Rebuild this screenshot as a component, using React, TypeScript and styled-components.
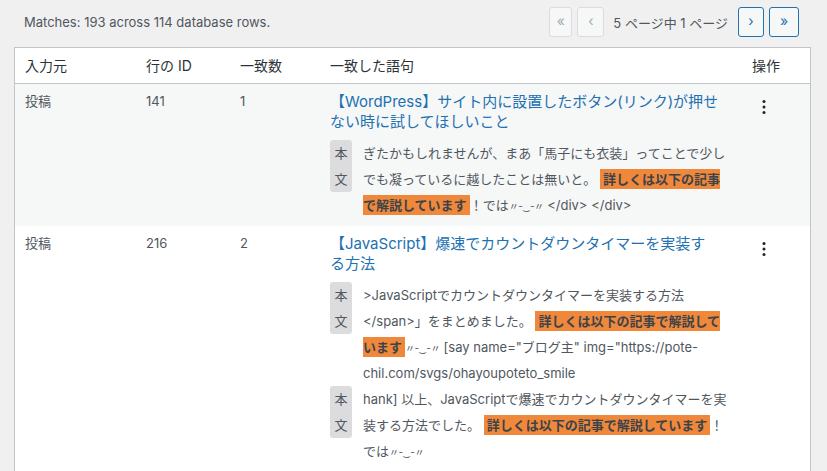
import React from "react";
import styled, { createGlobalStyle } from "styled-components";

const GlobalStyle = createGlobalStyle`
  *, *::before, *::after { box-sizing: border-box; }
  body {
    margin: 0;
    background: #f0f0f1;
    font-family: "Inter", "Noto Sans CJK JP", sans-serif;
    color: #3c434a;
  }
`;

const Page = styled.div`
  padding: 0 16px 0 14px;
`;

const TopBar = styled.div`
  display: flex;
  justify-content: space-between;
  align-items: center;
  padding: 7px 12px 10px 10px;
`;

const Summary = styled.div`
  font-size: 13px;
  color: #50575e;
`;

const Pager = styled.div`
  display: flex;
  align-items: center;
  gap: 5px;
`;

const PageButton = styled.span<{ $w: number; $disabled?: boolean }>`
  display: flex;
  align-items: center;
  justify-content: center;
  width: ${(p) => p.$w}px;
  height: 30px;
  border: 1px solid ${(p) => (p.$disabled ? "#dcdcde" : "#2271b1")};
  border-radius: 3px;
  background: #f6f7f7;
  color: ${(p) => (p.$disabled ? "#a7aaad" : "#2271b1")};
  font-size: 14px;
  line-height: 1;
  padding-bottom: 2px;
`;

const PageText = styled.span`
  font-size: 13px;
  color: #50575e;
  margin: 0 5px 0 4px;
`;

const Table = styled.table`
  width: 100%;
  table-layout: fixed;
  border-collapse: separate;
  border-spacing: 0;
  background: #fff;
  border: 1px solid #c3c4c7;
`;

const Th = styled.th<{ $w?: number }>`
  width: ${(p) => (p.$w ? `${p.$w}px` : "auto")};
  text-align: left;
  font-weight: 400;
  font-size: 14px;
  line-height: 19px;
  color: #2c3338;
  padding: 8px 10px;
  border-bottom: 1px solid #c3c4c7;
`;

const Row = styled.tr<{ $alt?: boolean }>`
  background: ${(p) => (p.$alt ? "#f6f7f7" : "#fff")};
`;

const Td = styled.td`
  vertical-align: top;
  padding: 8px 10px;
  font-size: 13px;
  line-height: 19.5px;
  color: #50575e;
`;

const Title = styled.a`
  display: block;
  font-size: 15px;
  line-height: 19.5px;
  color: #2271b1;
  text-decoration: none;
  white-space: nowrap;
  margin-bottom: 9px;
`;

const Snippet = styled.div`
  display: flex;
  align-items: flex-start;
  gap: 11px;
`;

const Label = styled.span`
  flex: none;
  width: 22px;
  text-align: center;
  background: #dcdcde;
  color: #50575e;
  border-radius: 3px;
  font-size: 13px;
  line-height: 26px;
`;

const SnippetText = styled.div`
  font-size: 13px;
  line-height: 26px;
  color: #50575e;
  white-space: nowrap;
`;

const Mark = styled.span`
  background: #f0883c;
  color: #3c434a;
  font-weight: 700;
  padding: 2px 3px;
`;

const Kao = styled.span`
  font-size: 10px;
  line-height: 0;
  letter-spacing: -0.5px;
`;

const MenuButton = styled.span`
  display: block;
  width: 24px;
  height: 24px;
  margin-top: 3px;
`;

const Kebab = () => (
  <MenuButton>
    <svg width="24" height="24" viewBox="0 0 24 24">
      <circle cx="12" cy="6.5" r="1.5" fill="#1d2327" />
      <circle cx="12" cy="12" r="1.5" fill="#1d2327" />
      <circle cx="12" cy="17.5" r="1.5" fill="#1d2327" />
    </svg>
  </MenuButton>
);

const kao = <Kao>〃-‿-〃</Kao>;

export default function App() {
  return (
    <Page>
      <GlobalStyle />
      <TopBar>
        <Summary>Matches: 193 across 114 database rows.</Summary>
        <Pager>
          <PageButton $w={23} $disabled>«</PageButton>
          <PageButton $w={27} $disabled>‹</PageButton>
          <PageText>5 ページ中 1 ページ</PageText>
          <PageButton $w={26}>›</PageButton>
          <PageButton $w={30}>»</PageButton>
        </Pager>
      </TopBar>
      <Table>
        <thead>
          <tr>
            <Th $w={121}>入力元</Th>
            <Th $w={94}>行の ID</Th>
            <Th $w={90}>一致数</Th>
            <Th $w={422}>一致した語句</Th>
            <Th>操作</Th>
          </tr>
        </thead>
        <tbody>
          <Row $alt>
            <Td>投稿</Td>
            <Td>141</Td>
            <Td>1</Td>
            <Td>
              <Title href="#">
                【WordPress】サイト内に設置したボタン(リンク)が押せ
                <br />
                ない時に試してほしいこと
              </Title>
              <Snippet>
                <Label>本文</Label>
                <SnippetText>
                  ぎたかもしれませんが、まあ「馬子にも衣装」ってことで少し
                  <br />
                  でも凝っているに越したことは無いと。 <Mark>詳しくは以下の記事<br />で解説しています</Mark>！では{kao} &lt;/div&gt; &lt;/div&gt;
                </SnippetText>
              </Snippet>
            </Td>
            <Td>
              <Kebab />
            </Td>
          </Row>
          <Row>
            <Td>投稿</Td>
            <Td>216</Td>
            <Td>2</Td>
            <Td>
              <Title href="#">
                【JavaScript】爆速でカウントダウンタイマーを実装す
                <br />
                る方法
              </Title>
              <Snippet>
                <Label>本文</Label>
                <SnippetText>
                  &gt;JavaScriptでカウントダウンタイマーを実装する方法
                  <br />
                  &lt;/span&gt;」をまとめました。 <Mark>詳しくは以下の記事で解説して<br />います</Mark>{kao} [say name="ブログ主" img="https://pote-
                  <br />
                  chil.com/svgs/ohayoupoteto_smile
                </SnippetText>
              </Snippet>
              <Snippet>
                <Label>本文</Label>
                <SnippetText>
                  hank] 以上、JavaScriptで爆速でカウントダウンタイマーを実
                  <br />
                  装する方法でした。 <Mark>詳しくは以下の記事で解説しています</Mark>！
                  <br />
                  では{kao}
                </SnippetText>
              </Snippet>
            </Td>
            <Td>
              <Kebab />
            </Td>
          </Row>
        </tbody>
      </Table>
    </Page>
  );
}
